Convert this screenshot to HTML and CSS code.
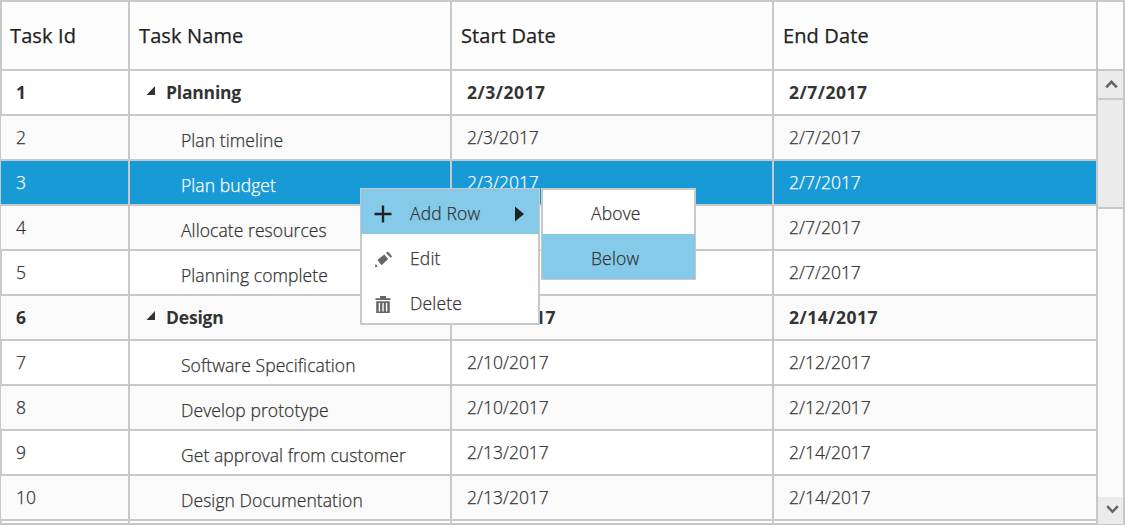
FILE: index.html
```html
<!DOCTYPE html>
<html lang="en">
<head>
<meta charset="utf-8">
<title>Tasks</title>
<link rel="stylesheet" href="styles.css">
</head>
<body>
<div class="gantt">
  <div class="grid">
    <div class="head"><div>Task Id</div><div>Task Name</div><div>Start Date</div><div>End Date</div></div>
    <div class="row parent"><div>1</div><div class="name"><svg class="tri" viewBox="0 0 9 9"><path d="M0.5 9L9 0V9Z"/></svg><span>Planning</span></div><div>2/3/2017</div><div>2/7/2017</div></div>
    <div class="row alt"><div>2</div><div class="name"><span>Plan timeline</span></div><div>2/3/2017</div><div>2/7/2017</div></div>
    <div class="row selected"><div>3</div><div class="name"><span>Plan budget</span></div><div>2/3/2017</div><div>2/7/2017</div></div>
    <div class="row alt"><div>4</div><div class="name"><span>Allocate resources</span></div><div>2/6/2017</div><div>2/7/2017</div></div>
    <div class="row"><div>5</div><div class="name"><span>Planning complete</span></div><div>2/7/2017</div><div>2/7/2017</div></div>
    <div class="row alt parent"><div>6</div><div class="name"><svg class="tri" viewBox="0 0 9 9"><path d="M0.5 9L9 0V9Z"/></svg><span>Design</span></div><div>2/10/2017</div><div>2/14/2017</div></div>
    <div class="row"><div>7</div><div class="name"><span>Software Specification</span></div><div>2/10/2017</div><div>2/12/2017</div></div>
    <div class="row alt"><div>8</div><div class="name"><span>Develop prototype</span></div><div>2/10/2017</div><div>2/12/2017</div></div>
    <div class="row"><div>9</div><div class="name"><span>Get approval from customer</span></div><div>2/13/2017</div><div>2/14/2017</div></div>
    <div class="row alt"><div>10</div><div class="name"><span>Design Documentation</span></div><div>2/13/2017</div><div>2/14/2017</div></div>
    <div class="row last"><div></div><div></div><div></div><div></div></div>
  </div>
  <div class="scroll">
    <div class="corner"></div>
    <div class="btn up"><svg width="13" height="9" viewBox="0 0 13 9"><path d="M1.2 7.4L6.5 1.8L11.8 7.4"/></svg></div>
    <div class="thumb"></div>
    <div class="track"></div>
    <div class="btn down"><svg width="13" height="9" viewBox="0 0 13 9"><path d="M1.2 1.2L6.5 6.8L11.8 1.2"/></svg></div>
  </div>
</div>
<div class="menu">
  <div class="item active"><svg class="icon" viewBox="0 0 18 18"><path class="plus" d="M0.5 9H17.5M9 0.5V17.5"/></svg><span>Add Row</span><svg class="arrow" viewBox="0 0 9 16"><path d="M0 0.5L9 8L0 15.5Z"/></svg></div>
  <div class="item"><svg class="icon" viewBox="0 0 18 18"><path d="M1.6 14L4 16.6L0.9 17.2ZM3.4 10L10.2 4.4L14.2 9L7.6 15.2ZM12 3L13.8 1.6L18.2 6.4L16.7 7.8Z"/></svg><span>Edit</span></div>
  <div class="item"><svg class="icon" viewBox="0 0 18 18"><path fill-rule="evenodd" d="M1.5 3.2H6V1H12V3.2H16.5V5H1.5ZM2.2 6.2H15.8V18H2.2ZM4.7 8V16.6H6.1V8ZM8.3 8V16.6H9.7V8ZM11.9 8V16.6H13.3V8Z"/></svg><span>Delete</span></div>
</div>
<div class="menu sub">
  <div class="item"><span>Above</span></div>
  <div class="item active"><span>Below</span></div>
</div>
</body>
</html>
```
FILE: styles.css
```css
* { box-sizing: border-box; }
body { margin: 0; width: 1125px; height: 525px; overflow: hidden; background: #fff; color: #333; font: 300 17.5px/24px "Open Sans", sans-serif; letter-spacing: 0; -webkit-text-stroke: 0.25px; }
.gantt { display: flex; height: 525px; border-top: 2px solid #c8c8c8; border-right: 2px solid #c8c8c8; }
.grid { width: 1098px; border-bottom: 2px solid #c8c8c8; }
.head, .row { display: grid; grid-template-columns: 130px 322px 322px 324px; }
.head > div, .row > div { border-right: 2px solid #c8c8c8; border-bottom: 2px solid #c8c8c8; white-space: nowrap; }
.head > div:first-child, .row > div:first-child { border-left: 2px solid #c8c8c8; }
.head { height: 69px; background: #fdfdfd; color: #222; font-size: 20px; font-weight: 400; letter-spacing: 0.12px; }
.head > div { padding: 22px 9px 0; }
.head > div:first-child { padding-left: 8px; }
.row { height: 45px; background: #fff; }
.row > div { padding: 9px 15px 0; }
.row > div:first-child { padding-left: 14px; }
.row.alt { background: #fafafa; }
.row.alt > div:first-child, .row.selected > div:first-child { border-left-width: 1px; padding-left: 15px; }
.row .name { padding: 12px 0 0 51px; letter-spacing: 0.08px; }
.row.parent { font-weight: 700; letter-spacing: 0.5px; -webkit-text-stroke: 0; }
.row.parent .name { display: flex; padding: 9px 0 0 16px; letter-spacing: -0.2px; }
.tri { width: 9px; height: 9px; margin: 6px 11px 0 0; fill: #333; }
.row.selected { background: #189ad6; color: #fff; }
.row.last { height: 2px; }
.row.last > div { border-bottom: 0; padding-top: 0; }
.scroll { display: flex; flex-direction: column; width: 25px; border-bottom: 1px solid #c8c8c8; }
.corner { height: 69px; background: #fdfdfd; border-bottom: 2px solid #c8c8c8; }
.btn { display: flex; align-items: center; justify-content: center; height: 27px; padding-left: 2px; background: #ebebeb; }
.btn.up { height: 29px; padding-bottom: 1px; border-bottom: 2px solid #c8c8c8; }
.btn.down { padding: 0 0 2px 3px; }
.btn path { fill: none; stroke: #666; stroke-width: 2.5; }
.thumb { height: 109px; background: #ebebeb; border-bottom: 2px solid #c8c8c8; }
.track { flex: 1; background: #fafafa; }
.menu { position: absolute; left: 360px; top: 188px; width: 180px; height: 137px; border: 1px solid #c8c8c8; background: #fff; box-shadow: inset 0 0 0 1px #c8c8c8; }
.menu.sub { left: 541px; width: 155px; height: 92px; }
.item { display: flex; align-items: center; height: 45px; padding: 3px 0 0 13px; color: #333; letter-spacing: 0.15px; }
.item span { width: 105px; }
.item.active { background: #86caea; }
.sub .item { padding-left: 49px; }
.icon { width: 18px; height: 18px; margin: 1px 18px 0 0; fill: #666; }
.plus { stroke: #222; stroke-width: 2.4; }
.arrow { width: 9px; height: 16px; margin-top: 2px; fill: #222; }
```
